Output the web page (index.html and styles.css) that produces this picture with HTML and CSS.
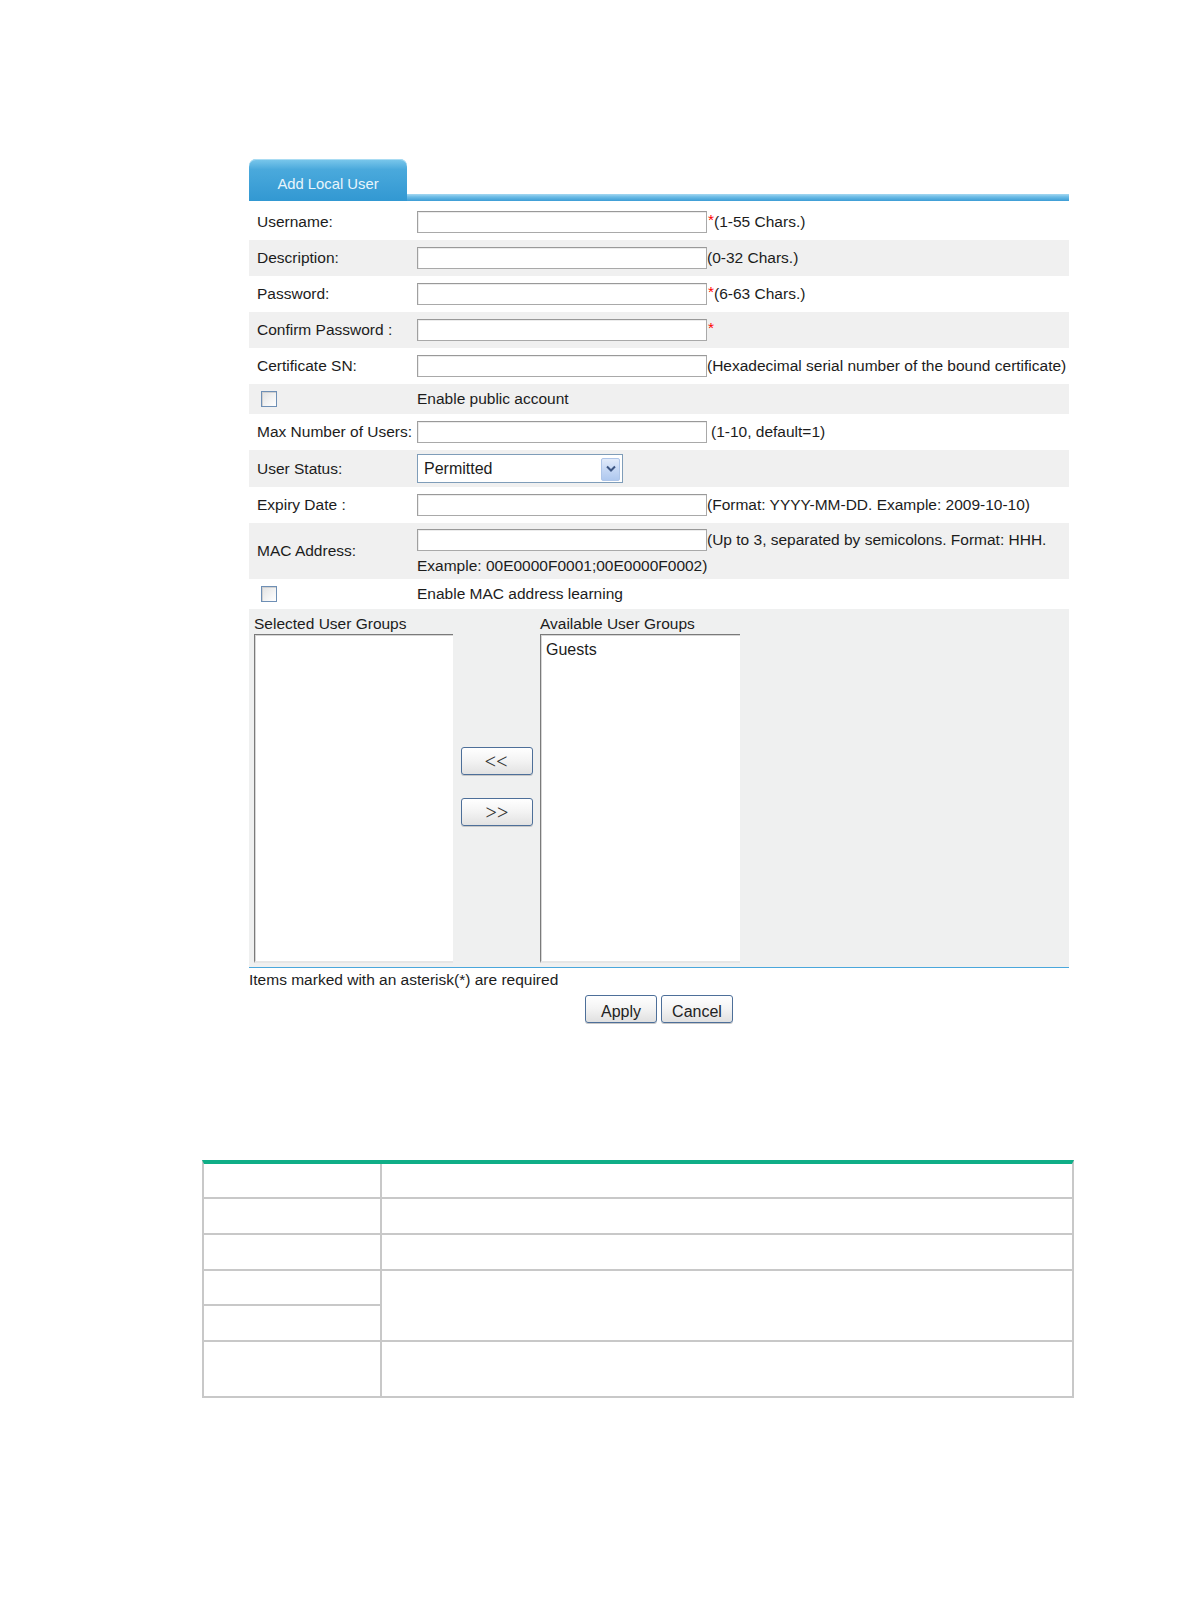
FILE: index.html
```html
<!DOCTYPE html>
<html lang="en">
<head>
<meta charset="utf-8">
<title>Add Local User</title>
<link rel="stylesheet" href="styles.css">
</head>
<body>
<div class="page">
  <div class="panel">
    <div class="tabbar">
      <div class="tab">Add Local User</div>
      <div class="tabline"></div>
    </div>
    <div class="rows">
      <div class="row">
        <div class="lbl">Username:</div>
        <div class="val"><input class="txt" type="text"><span class="req">*</span><span class="hint">(1-55 Chars.)</span></div>
      </div>
      <div class="row alt">
        <div class="lbl">Description:</div>
        <div class="val"><input class="txt" type="text"><span class="hint">(0-32 Chars.)</span></div>
      </div>
      <div class="row">
        <div class="lbl">Password:</div>
        <div class="val"><input class="txt" type="password"><span class="req">*</span><span class="hint">(6-63 Chars.)</span></div>
      </div>
      <div class="row alt">
        <div class="lbl">Confirm Password :</div>
        <div class="val"><input class="txt" type="password"><span class="req">*</span></div>
      </div>
      <div class="row">
        <div class="lbl">Certificate SN:</div>
        <div class="val"><input class="txt" type="text"><span class="hint">(Hexadecimal serial number of the bound certificate)</span></div>
      </div>
      <div class="row alt short">
        <div class="lbl"><input class="chk" type="checkbox"></div>
        <div class="val"><span class="plain">Enable public account</span></div>
      </div>
      <div class="row">
        <div class="lbl">Max Number of Users:</div>
        <div class="val"><input class="txt" type="text"><span class="hint gap">(1-10, default=1)</span></div>
      </div>
      <div class="row alt status">
        <div class="lbl">User Status:</div>
        <div class="val">
          <div class="select"><span class="select-text">Permitted</span><span class="select-btn"><svg width="12" height="8" viewBox="0 0 12 8"><path d="M2 1.5 L6 5.5 L10 1.5" fill="none" stroke="#3d5683" stroke-width="2"/></svg></span></div>
        </div>
      </div>
      <div class="row">
        <div class="lbl">Expiry Date :</div>
        <div class="val"><input class="txt" type="text"><span class="hint">(Format: YYYY-MM-DD. Example: 2009-10-10)</span></div>
      </div>
      <div class="row alt mac">
        <div class="lbl">MAC Address:</div>
        <div class="val col">
          <div class="macline"><input class="txt" type="text"><span class="hint">(Up to 3, separated by semicolons. Format: HHH.</span></div>
          <div class="macex">Example: 00E0000F0001;00E0000F0002)</div>
        </div>
      </div>
      <div class="row short">
        <div class="lbl"><input class="chk" type="checkbox"></div>
        <div class="val"><span class="plain">Enable MAC address learning</span></div>
      </div>
    </div>
    <div class="groups">
      <div class="gcol">
        <div class="glabel">Selected User Groups</div>
        <div class="glist"></div>
      </div>
      <div class="gmid">
        <button class="mv" type="button">&lt;&lt;</button>
        <button class="mv" type="button">&gt;&gt;</button>
      </div>
      <div class="gcol avail">
        <div class="glabel">Available User Groups</div>
        <div class="glist"><div class="gitem">Guests</div></div>
      </div>
    </div>
    <div class="note">Items marked with an asterisk(*) are required</div>
    <div class="actions">
      <button class="btn" type="button">Apply</button>
      <button class="btn" type="button">Cancel</button>
    </div>
  </div>

  <div class="spec">
    <div class="c"></div><div class="c"></div>
    <div class="c"></div><div class="c"></div>
    <div class="c"></div><div class="c"></div>
    <div class="c"></div><div class="c span2"></div>
    <div class="c"></div>
    <div class="c"></div><div class="c"></div>
  </div>
</div>
</body>
</html>
```

FILE: styles.css
```css
* { box-sizing: border-box; }

html, body {
  margin: 0;
  padding: 0;
  background: #ffffff;
}

body {
  font-family: "Liberation Sans", Arial, sans-serif;
  font-size: 15.5px;
  color: #1c1c1c;
}

.page {
  padding-top: 159px;
  padding-bottom: 200px;
}

.panel {
  margin-left: 249px;
  width: 820px;
}

/* tab header */
.tabbar {
  display: flex;
  height: 42px;
}

.tab {
  width: 158px;
  height: 42px;
  border-radius: 7px 7px 0 0;
  background: linear-gradient(to bottom, #7cc8ec 0%, #4aa9dc 25%, #3298d2 100%);
  box-shadow: inset 0 1px 0 #a9dcf3;
  color: #e8f5fc;
  font-size: 14.8px;
  text-align: center;
  padding-top: 17px;
}

.tabline {
  flex: 1;
  align-self: flex-end;
  height: 7px;
  background: linear-gradient(to bottom, #a6d9f2 0%, #6dbce6 40%, #3d9dd5 100%);
}

/* form rows */
.rows {
  padding-top: 3px;
}

.row {
  display: flex;
  align-items: center;
  height: 36px;
}

.row.alt { background: #f0f0f0; }
.row.short { height: 30px; }
.row.status { height: 37px; }
.row.mac { height: 56px; }

.lbl {
  width: 168px;
  padding-left: 8px;
  white-space: nowrap;
  display: flex;
  align-items: center;
}

.val {
  flex: 1;
  display: flex;
  align-items: center;
  white-space: nowrap;
}

.val.col {
  flex-direction: column;
  align-items: flex-start;
  align-self: flex-start;
  padding-top: 6px;
}

.macline {
  display: flex;
  align-items: center;
  height: 22px;
}

.macex {
  margin-top: 5px;
  line-height: 20px;
}

.txt {
  width: 290px;
  height: 22px;
  margin: 0;
  padding: 0 3px;
  border: 1px solid #a9a9a9;
  border-top-color: #999999;
  border-left-color: #a0a0a0;
  background: #ffffff;
  box-shadow: inset 1px 1px 0 #ececec;
  font: inherit;
}

.req {
  color: #ff0000;
  margin-left: 1px;
  align-self: flex-start;
  line-height: 18px;
}

.hint.gap { margin-left: 4px; }

.chk {
  appearance: none;
  -webkit-appearance: none;
  width: 16px;
  height: 16px;
  margin: 0 0 0 4px;
  border: 1px solid #6e8fb5;
  background: linear-gradient(135deg, #e2e2e2 0%, #f4f4f4 60%, #ffffff 100%);
  box-shadow: inset 1px 1px 0 #d0d0d0;
}

/* select */
.select {
  width: 206px;
  height: 29px;
  border: 1px solid #7f9db9;
  background: #ffffff;
  display: flex;
  align-items: center;
  justify-content: space-between;
  padding: 2px 2px 1px 6px;
  font-size: 16px;
}

.select-btn {
  width: 19px;
  height: 23px;
  border: 1px solid #aec5e8;
  border-radius: 2px;
  background: linear-gradient(to bottom, #e2ebfa 0%, #c3d6f4 55%, #afc8ef 100%);
  display: flex;
  align-items: center;
  justify-content: center;
}

/* user groups */
.groups {
  display: flex;
  background: #eff0f0;
  height: 359px;
  padding: 6px 0 4px 5px;
  border-bottom: 1px solid #4aa7dc;
}

.gcol {
  width: 199px;
  display: flex;
  flex-direction: column;
}

.gcol.avail { width: 200px; }

.glabel {
  height: 19px;
  line-height: 17px;
  white-space: nowrap;
}

.glist {
  flex: 1;
  background: #ffffff;
  border-style: solid;
  border-width: 1px 0 0 1px;
  border-color: #7a7a7a;
  box-shadow: inset 1px 1px 0 #d6d6d6;
  border-bottom: 2px solid #e6e6e6;
  padding: 6px 5px 4px;
}

.gitem {
  font-size: 16px;
  line-height: 18px;
}

.gmid {
  width: 87px;
  margin-top: -6px;
  margin-bottom: 0;
  display: flex;
  flex-direction: column;
  align-items: center;
  justify-content: center;
  gap: 23px;
}

.mv {
  width: 72px;
  height: 28px;
  margin: 0;
  padding: 0 0 3px;
  border: 1px solid #4d6f99;
  border-radius: 3px;
  background: linear-gradient(to bottom, #ffffff 0%, #f3f3f3 50%, #e2e2e2 100%);
  box-shadow: 0 1px 0 #c7c7c7;
  font-family: "Lato", "Liberation Sans", sans-serif;
  font-weight: 300;
  font-size: 25px;
  letter-spacing: -3px;
  text-indent: -3px;
  color: #333333;
  line-height: 1;
}

/* footer */
.note {
  padding-top: 2px;
  line-height: 20px;
  white-space: nowrap;
}

.actions {
  margin-top: 5px;
  display: flex;
  justify-content: center;
  gap: 4px;
}

.btn {
  width: 72px;
  height: 28px;
  margin: 0;
  padding: 5px 0 0;
  border: 1px solid #4d6f99;
  border-radius: 3px;
  background: linear-gradient(to bottom, #ffffff 0%, #f3f3f3 50%, #e0e0e0 100%);
  box-shadow: 0 1px 0 #c7c7c7;
  font-family: "Liberation Sans", Arial, sans-serif;
  font-size: 16px;
  line-height: 18px;
  color: #222222;
}

/* empty spec table */
.spec {
  margin-top: 137px;
  margin-left: 202px;
  width: 872px;
  display: grid;
  grid-template-columns: 176px 1fr;
  grid-template-rows: 33px 34px 34px 33px 34px 54px;
  gap: 2px;
  background: #c8c8c8;
  border: 2px solid #c8c8c8;
  border-top: 4px solid #0fae87;
}

.c { background: #ffffff; }
.span2 { grid-row: span 2; }
```
